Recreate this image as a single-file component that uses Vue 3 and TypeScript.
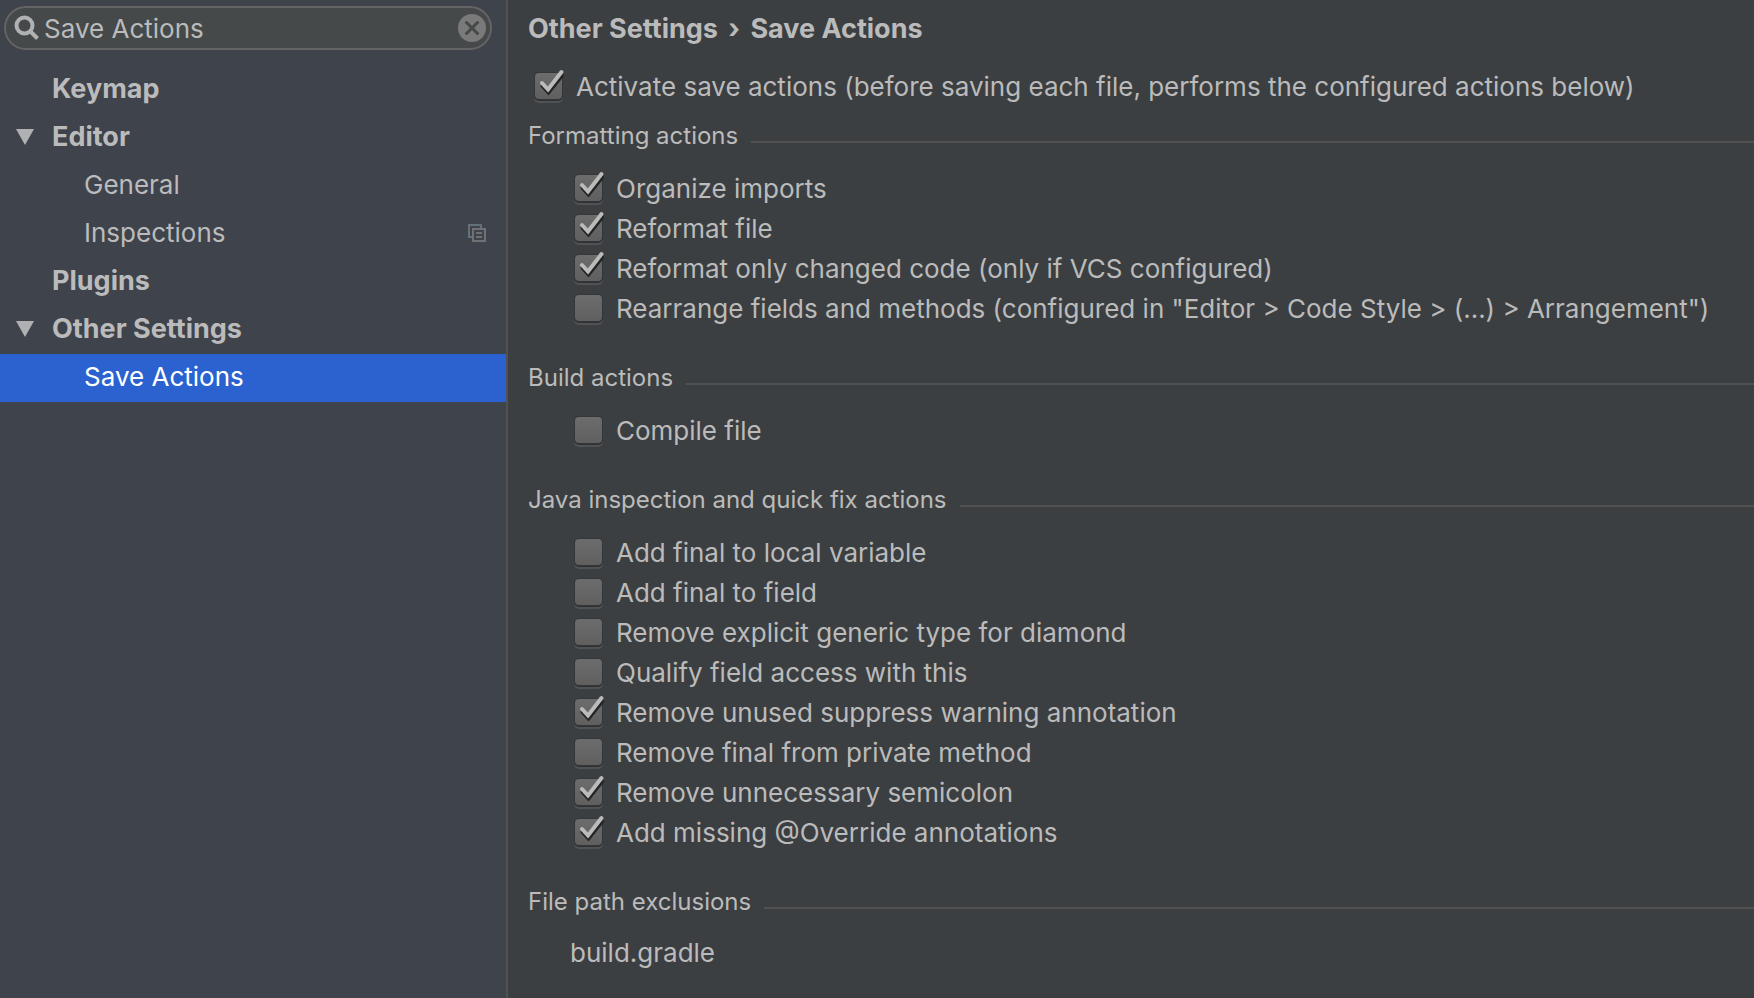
<script setup lang="ts">
import { ref } from 'vue'

interface TreeItem {
  label: string
  level: 'group' | 'leaf'
  open?: boolean
  copy?: boolean
}

interface Option {
  id: string
  label: string
  on: boolean
}

interface Section {
  title: string
  options: Option[]
}

const query = ref('Save Actions')
const selected = ref('Save Actions')
const active = ref(true)

const tree: TreeItem[] = [
  { label: 'Keymap', level: 'group' },
  { label: 'Editor', level: 'group', open: true },
  { label: 'General', level: 'leaf' },
  { label: 'Inspections', level: 'leaf', copy: true },
  { label: 'Plugins', level: 'group' },
  { label: 'Other Settings', level: 'group', open: true },
  { label: 'Save Actions', level: 'leaf' },
]

const sections = ref<Section[]>([
  {
    title: 'Formatting actions',
    options: [
      { id: 'organize', label: 'Organize imports', on: true },
      { id: 'reformat', label: 'Reformat file', on: true },
      { id: 'changed', label: 'Reformat only changed code (only if VCS configured)', on: true },
      { id: 'rearrange', label: 'Rearrange fields and methods (configured in "Editor > Code Style > (...) > Arrangement")', on: false },
    ],
  },
  {
    title: 'Build actions',
    options: [{ id: 'compile', label: 'Compile file', on: false }],
  },
  {
    title: 'Java inspection and quick fix actions',
    options: [
      { id: 'final-local', label: 'Add final to local variable', on: false },
      { id: 'final-field', label: 'Add final to field', on: false },
      { id: 'diamond', label: 'Remove explicit generic type for diamond', on: false },
      { id: 'qualify', label: 'Qualify field access with this', on: false },
      { id: 'suppress', label: 'Remove unused suppress warning annotation', on: true },
      { id: 'private-final', label: 'Remove final from private method', on: false },
      { id: 'semicolon', label: 'Remove unnecessary semicolon', on: true },
      { id: 'override', label: 'Add missing @Override annotations', on: true },
    ],
  },
])

const exclusions = ['build.gradle']
</script>

<template>
  <div class="settings">
    <aside class="sidebar">
      <div class="search">
        <svg class="lens" width="26" height="26" viewBox="0 0 26 26" aria-hidden="true">
          <circle cx="10.5" cy="10.5" r="8" />
          <path d="M16.5 16.5L23.5 23.5" />
        </svg>
        <input v-model="query" type="text" aria-label="Search settings" />
        <button type="button" class="clear" aria-label="Clear search" @click="query = ''">
          <svg width="28" height="28" viewBox="0 0 28 28" aria-hidden="true">
            <circle cx="14" cy="14" r="14" />
            <path d="M8.5 8.5L19.5 19.5M19.5 8.5L8.5 19.5" />
          </svg>
        </button>
      </div>
      <nav class="tree">
        <button
          v-for="item in tree"
          :key="item.label"
          type="button"
          class="node"
          :class="[item.level, { selected: item.label === selected }]"
          @click="selected = item.label"
        >
          <span v-if="item.level === 'group'" class="arrow">
            <svg v-if="item.open" width="18" height="16" viewBox="0 0 18 16" aria-hidden="true">
              <path d="M0 0H18L9 16Z" />
            </svg>
          </span>
          <span class="name">{{ item.label }}</span>
          <svg v-if="item.copy" class="copy" width="18" height="18" viewBox="0 0 18 18" aria-hidden="true">
            <path class="back" d="M4 13H1V1H13V4" />
            <path class="front" d="M5 5H17V17H5ZM8 9H14M8 13H14" />
          </svg>
        </button>
      </nav>
    </aside>

    <main class="content">
      <h1>Other Settings <span class="sep">›</span> Save Actions</h1>

      <label class="option master">
        <span class="box">
          <input v-model="active" type="checkbox" />
          <svg v-if="active" width="34" height="36" viewBox="0 0 34 36" aria-hidden="true">
            <path class="shade" d="M10.5 17L16.5 23.5L30 6.5" />
            <path class="tick" d="M10 14L16 20.5L29.5 3" />
          </svg>
        </span>
        <span>Activate save actions (before saving each file, performs the configured actions below)</span>
      </label>

      <section v-for="section in sections" :key="section.title">
        <h2>{{ section.title }}</h2>
        <div class="options">
          <label v-for="option in section.options" :key="option.id" class="option">
            <span class="box">
              <input v-model="option.on" type="checkbox" />
              <svg v-if="option.on" width="34" height="36" viewBox="0 0 34 36" aria-hidden="true">
                <path class="shade" d="M10.5 17L16.5 23.5L30 6.5" />
                <path class="tick" d="M10 14L16 20.5L29.5 3" />
              </svg>
            </span>
            <span>{{ option.label }}</span>
          </label>
        </div>
      </section>

      <section>
        <h2>File path exclusions</h2>
        <ul class="paths">
          <li v-for="path in exclusions" :key="path">{{ path }}</li>
        </ul>
      </section>
    </main>
  </div>
</template>

<style>
body {
  margin: 0;
  background: #3c3f41;
}
</style>

<style scoped>
.settings {
  display: flex;
  min-height: 100vh;
  overflow: hidden;
  background: #3c3f41;
  color: #bbbbbb;
  font-family: Inter, Roboto, 'Liberation Sans', sans-serif;
  font-size: 26px;
  line-height: 40px;
}

.sidebar {
  flex: none;
  box-sizing: border-box;
  width: 508px;
  padding-top: 6px;
  border-right: 2px solid #515151;
  background: #3f434c;
}

.search {
  display: flex;
  align-items: center;
  box-sizing: border-box;
  height: 44px;
  margin: 0 14px 16px 4px;
  padding: 0 4px 0 8px;
  border: 2px solid #646464;
  border-radius: 22px;
  background: #45494a;
}

.lens {
  flex: none;
  fill: none;
  stroke: #afb1b3;
  stroke-width: 4;
}

.search input {
  flex: 1;
  min-width: 0;
  height: 36px;
  padding: 1px 4px 0;
  border: 0;
  outline: 0;
  background: transparent;
  color: #bbbbbb;
  font: inherit;
}

.clear {
  display: flex;
  padding: 0;
  border: 0;
  background: transparent;
}

.clear circle {
  fill: #7a7a7a;
}

.clear path {
  fill: none;
  stroke: #45494a;
  stroke-width: 3;
  stroke-linecap: round;
}

.tree {
  display: flex;
  flex-direction: column;
}

.node {
  display: flex;
  align-items: center;
  height: 48px;
  padding: 0 20px 2px 16px;
  border: 0;
  background: transparent;
  color: #bbbbbb;
  font: inherit;
  text-align: left;
}

.node.group {
  font-size: 27px;
  font-weight: 700;
}

.node.leaf {
  padding-left: 84px;
}

.node.selected {
  background: #2b62cf;
  color: #ffffff;
}

.arrow {
  display: flex;
  width: 36px;
}

.arrow path {
  fill: #afb1b3;
}

.name {
  flex: 1;
}

.copy {
  fill: none;
  stroke-width: 2;
}

.copy .back {
  stroke: #64707a;
}

.copy .front {
  stroke: #6f7173;
}

.content {
  flex: 1;
  min-width: 0;
  padding: 9px 0 0 20px;
  white-space: nowrap;
}

h1 {
  margin: 0;
  font-size: 27px;
  font-weight: 700;
  line-height: 40px;
}

.sep {
  margin: 0 4px;
}

.master {
  margin: 18px 0 14px 4px;
}

.option {
  display: flex;
  align-items: center;
  gap: 10px;
  height: 40px;
}

.box {
  display: grid;
  flex: none;
  width: 34px;
  height: 36px;
}

.box input,
.box svg {
  grid-area: 1 / 1;
}

.box input {
  width: 27px;
  height: 26px;
  margin: 4px 0 0 3px;
  appearance: none;
  border-radius: 4px;
  background: linear-gradient(#6c6c6c, #5f5f5f);
  box-shadow: 0 0 0 1px #343638, 0 1px 0 1px #2f3133, 0 3px 0 1px #505355;
}

.box svg {
  fill: none;
  stroke-width: 4;
  stroke-linecap: round;
  pointer-events: none;
}

.shade {
  stroke: #252525;
}

.tick {
  stroke: #bbbbbb;
}

section {
  margin-bottom: 34px;
}

h2 {
  display: flex;
  align-items: center;
  gap: 13px;
  margin: 0;
  font-size: 24px;
  font-weight: 400;
  line-height: 30px;
}

h2::after {
  flex: 1;
  height: 2px;
  margin-top: 12px;
  background: #515151;
  content: '';
}

.options {
  padding: 18px 0 0 44px;
}

.paths {
  margin: 0;
  padding: 16px 0 0 42px;
  list-style: none;
}
</style>
